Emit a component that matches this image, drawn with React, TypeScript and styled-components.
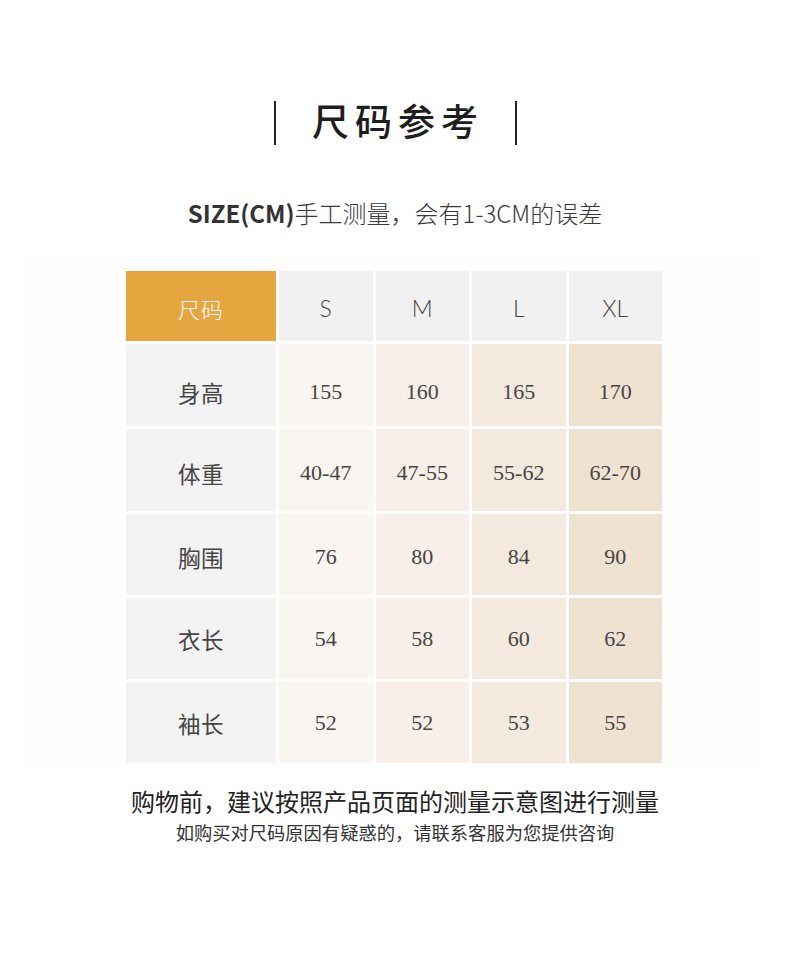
import React from "react";
import styled, { createGlobalStyle } from "styled-components";

const GlobalStyle = createGlobalStyle`
  html, body { margin: 0; padding: 0; background: #ffffff; }
  body { font-family: "Noto Sans CJK SC", "Noto Sans", sans-serif; }
`;

const Page = styled.div`
  width: 790px;
  height: 969px;
  display: flex;
  flex-direction: column;
  align-items: center;
  background: #ffffff;
`;

const TitleRow = styled.div`
  margin-top: 101px;
  width: 243px;
  height: 44px;
  display: flex;
  align-items: center;
  justify-content: space-between;
`;

const Bar = styled.span`
  width: 2px;
  height: 44px;
  background: #222;
`;

const Title = styled.h1`
  margin: 0;
  padding-left: 6px;
  font-family: "Noto Sans CJK SC", sans-serif;
  font-size: 37px;
  font-weight: 500;
  letter-spacing: 6px;
  line-height: 44px;
  color: #1e1e1e;
  transform: translateY(-3px);
`;

const Subtitle = styled.p`
  margin: 53px 0 0 0;
  line-height: 30px;
  font-family: "Noto Sans CJK SC", sans-serif;
  font-size: 24px;
  font-weight: 300;
  color: #3a3a3a;
  white-space: nowrap;
`;

const Strong = styled.b`
  font-weight: 700;
  color: #333;
`;

const Panel = styled.div`
  align-self: flex-start;
  margin-left: 24px;
  margin-top: 24px;
  width: 736px;
  padding: 19px 0 8px 102px;
  box-sizing: border-box;
  background: #fefefe;
`;

const Grid = styled.div`
  width: 536px;
  display: grid;
  grid-template-columns: 150px repeat(4, 1fr);
  grid-template-rows: 70px 82px 82px 81px 81px 81px;
  gap: 3px;
`;

const Cell = styled.div<{ $bg: string; $shift?: number }>`
  display: flex;
  align-items: center;
  justify-content: center;
  box-sizing: border-box;
  padding-top: ${(p) => (p.$shift ?? 0) * 2}px;
  background: ${(p) => p.$bg};
`;

const CornerText = styled.span`
  font-family: "Noto Sans CJK SC", sans-serif;
  font-size: 22px;
  font-weight: 300;
  color: #ffffff;
  letter-spacing: 1px;
`;

const SizeText = styled.span`
  font-family: Lato, "Open Sans", sans-serif;
  font-size: 23px;
  font-weight: 300;
  color: #444;
`;

const LabelText = styled.span`
  font-family: "Noto Sans CJK SC", sans-serif;
  font-size: 22.5px;
  font-weight: 400;
  color: #444;
  letter-spacing: 0.5px;
`;

const NumText = styled.span`
  font-family: "Liberation Serif", serif;
  font-size: 22px;
  color: #454545;
`;

const Note = styled.p`
  margin: 15px 0 0 0;
  font-family: "Noto Sans CJK SC", sans-serif;
  font-size: 24px;
  font-weight: 400;
  line-height: 30px;
  color: #222;
  white-space: nowrap;
`;

const SubNote = styled.p`
  margin: 3px 0 0 0;
  font-family: "Noto Sans CJK SC", sans-serif;
  font-size: 18.3px;
  font-weight: 400;
  line-height: 26px;
  color: #333;
  white-space: nowrap;
`;

const sizes = ["S", "M", "L", "XL"];
const colBg = ["#f9f6f2", "#f7efe8", "#f3e9de", "#f0e2d1"];
const rows: { label: string; shift: number; values: string[] }[] = [
  { label: "身高", shift: 7, values: ["155", "160", "165", "170"] },
  { label: "体重", shift: 3, values: ["40-47", "47-55", "55-62", "62-70"] },
  { label: "胸围", shift: 2, values: ["76", "80", "84", "90"] },
  { label: "衣长", shift: 0, values: ["54", "58", "60", "62"] },
  { label: "袖长", shift: 0, values: ["52", "52", "53", "55"] },
];

export default function App() {
  return (
    <>
      <GlobalStyle />
      <Page>
        <TitleRow>
          <Bar />
          <Title>尺码参考</Title>
          <Bar />
        </TitleRow>
        <Subtitle>
          <Strong>SIZE(CM)</Strong>手工测量，会有1-3CM的误差
        </Subtitle>
        <Panel>
          <Grid>
            <Cell $bg="#e5a53f" $shift={2}>
              <CornerText>尺码</CornerText>
            </Cell>
            {sizes.map((s) => (
              <Cell key={s} $bg="#f1f1f1" $shift={2}>
                <SizeText>{s}</SizeText>
              </Cell>
            ))}
            {rows.map((r) => (
              <React.Fragment key={r.label}>
                <Cell $bg="#f3f3f3" $shift={r.shift}>
                  <LabelText>{r.label}</LabelText>
                </Cell>
                {r.values.map((v, i) => (
                  <Cell key={i} $bg={colBg[i]} $shift={r.shift}>
                    <NumText>{v}</NumText>
                  </Cell>
                ))}
              </React.Fragment>
            ))}
          </Grid>
        </Panel>
        <Note>购物前，建议按照产品页面的测量示意图进行测量</Note>
        <SubNote>如购买对尺码原因有疑惑的，请联系客服为您提供咨询</SubNote>
      </Page>
    </>
  );
}
